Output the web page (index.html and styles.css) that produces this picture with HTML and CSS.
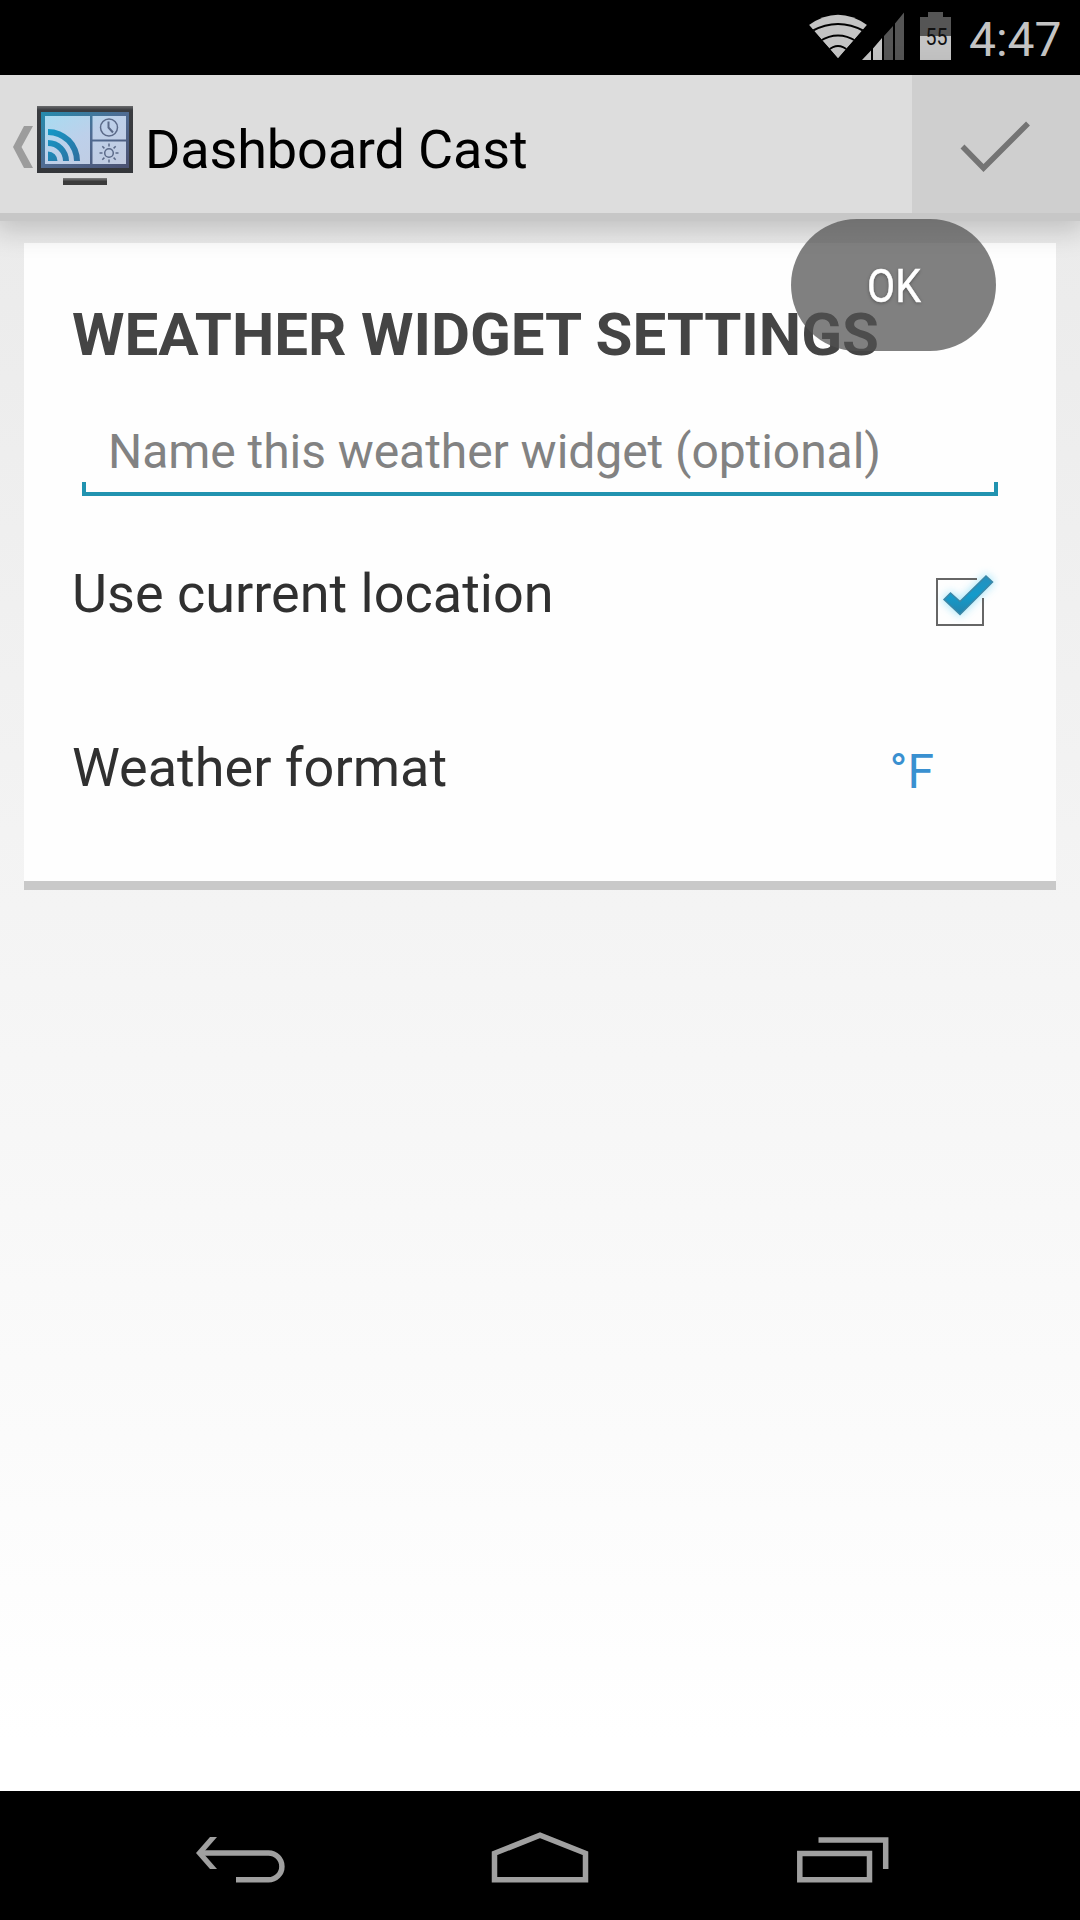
FILE: index.html
```html
<!DOCTYPE html>
<html lang="en">
<head>
<meta charset="utf-8">
<title>Dashboard Cast</title>
<link rel="stylesheet" href="styles.css">
</head>
<body>
<div class="screen">
  <header class="status-bar">
    <svg class="status-icons" width="146" height="50" viewBox="0 0 146 50">
      <defs>
        <clipPath id="fan"><path d="M30 48.500 L0 14 Q30 -9 60 14Z"/></clipPath>
      </defs>
      <g clip-path="url(#fan)">
        <path d="M30 48.500 L1 15 Q30 -5.500 59 15Z" fill="#c4c4c4"/>
        <g fill="none" stroke="#000" stroke-width="2">
          <path d="M4 21 Q30 7 56 21"/>
          <path d="M12 31 Q30 20 48 31"/>
          <path d="M20 40.500 Q30 31.500 40 40.500"/>
        </g>
      </g>
      <path d="M54 50 L63 40.500 V50Z M65 38.500 L74 28 V50 H65Z" fill="#c4c4c4"/>
      <path d="M76 26 L85 16 V50 H76Z M87 13.500 L96 2.500 V50 H87Z" fill="#555"/>
      <path d="M112 7 H120 V2 H135 V7 H143 V26 H112Z" fill="#555"/>
      <path d="M112 26 H143 V50 H112Z" fill="#c4c4c4"/>
      <text class="battery-level" x="128.500" y="35" text-anchor="middle" textLength="22" lengthAdjust="spacingAndGlyphs">55</text>
    </svg>
    <time class="clock">4:47</time>
  </header>

  <div class="action-bar">
    <svg class="up-caret" width="20" height="42" viewBox="0 0 20 42"><path d="M11 0 H20 L8.500 21 L20 42 H11 L0 21Z" fill="#9c9c9c"/></svg>
    <svg class="app-icon" width="96" height="80" viewBox="0 0 96 80">
      <defs>
        <linearGradient id="frame" x1="0" y1="0" x2="0" y2="1"><stop offset="0" stop-color="#6a6b6d"/><stop offset=".06" stop-color="#3a3c40"/><stop offset="1" stop-color="#34363a"/></linearGradient>
        <linearGradient id="bezel" x1="0" y1="0" x2="1" y2="1"><stop offset="0" stop-color="#248cae"/><stop offset=".5" stop-color="#506b92"/><stop offset="1" stop-color="#4b5171"/></linearGradient>
        <linearGradient id="glass" x1="0" y1="0" x2="1" y2="1"><stop offset="0" stop-color="#a8dbf1"/><stop offset=".45" stop-color="#bdd0ea"/><stop offset="1" stop-color="#c2cbe0"/></linearGradient>
        <linearGradient id="wave" x1="0" y1="0" x2="1" y2="1"><stop offset="0" stop-color="#1499c8"/><stop offset="1" stop-color="#2f6e9e"/></linearGradient>
      </defs>
      <path d="M0 0 H96 V67 H0Z" fill="url(#frame)"/>
      <path d="M4 6 H92 V62 H4Z" fill="url(#bezel)"/>
      <path d="M8 10 H53 V58 H8Z M55.500 10 H89 V33.500 H55.500Z M55.500 35.500 H89 V58 H55.500Z" fill="url(#glass)"/>
      <path d="M11 23 A32 32 0 0 1 43 55 H37 A26 26 0 0 0 11 29Z M11 34 A21 21 0 0 1 32 55 H26 A15 15 0 0 0 11 40Z M11 45.500 A9.500 9.500 0 0 1 20.500 55 H11Z" fill="url(#wave)"/>
      <g fill="none" stroke="#5b6a89" stroke-width="1.500">
        <circle cx="72" cy="21.500" r="8.500"/>
        <path d="M71.500 15.500 V21.500 L76 26.500" stroke-width="2"/>
        <circle cx="72" cy="47" r="4.300"/>
        <path d="M72 37.500 V40.500 M72 53.500 V56.500 M62.500 47 H65.500 M78.500 47 H81.500 M65.300 40.300 L67.400 42.400 M76.600 51.600 L78.700 53.700 M65.300 53.700 L67.400 51.600 M76.600 42.400 L78.700 40.300"/>
      </g>
      <path d="M26 72.500 H70 V79 H26Z" fill="#3b3b3b"/>
      <path d="M26 72.500 H70 V74.500 H26Z" fill="#626262"/>
    </svg>
    <h1 class="title">Dashboard Cast</h1>
    <button class="confirm" aria-label="OK">
      <svg width="72" height="54" viewBox="0 0 72 54"><path d="M3.500 25.500 L24.500 47 L69 2.500" fill="none" stroke="#747474" stroke-width="5.500"/></svg>
      <span class="tooltip"><span class="tooltip-text">OK</span></span>
    </button>
  </div>

  <main class="content">
    <section class="card">
      <h2 class="card-title">WEATHER WIDGET SETTINGS</h2>
      <div class="field"><span class="hint">Name this weather widget (optional)</span></div>
      <div class="row">
        <span class="label">Use current location</span>
        <svg class="checkbox" width="72" height="70" viewBox="0 0 72 70">
          <defs>
            <filter id="glow" x="-40%" y="-40%" width="180%" height="180%"><feGaussianBlur stdDeviation="4.500"/></filter>
            <linearGradient id="tick" x1="0" y1="0" x2="0" y2="1"><stop offset="0" stop-color="#278fbd"/><stop offset=".5" stop-color="#139bcb"/><stop offset="1" stop-color="#2584ad"/></linearGradient>
          </defs>
          <path d="M15.500 33.500 L22.500 26.500 L32 35 L58 9.500 L65 16 L32 49Z" fill="#8fdff8" stroke="#8fdff8" stroke-width="3" filter="url(#glow)" opacity=".75"/>
          <path d="M49 13 H9 V59 H55 V32" fill="none" stroke="#666" stroke-width="2"/>
          <path d="M16 33.500 L22.500 27 L32 35.500 L58 10 L64.500 16 L32 48.500Z" fill="url(#tick)" stroke="#3c87a7" stroke-width="1.500"/>
        </svg>
      </div>
      <div class="row">
        <span class="label">Weather format</span>
        <span class="unit">°F</span>
      </div>
    </section>
  </main>

  <nav class="nav-bar">
    <svg width="92" height="54" viewBox="0 0 92 54" fill="none" stroke="#a0a0a0" stroke-width="5.500"><path d="M6 22 H72.500 A13.400 13.400 0 0 1 72.500 48.800 H40"/><path d="M0 22 L14 6 H21 L7 22 L21 38 H14Z" fill="#a0a0a0" stroke="none"/></svg>
    <svg class="home" width="98" height="54" viewBox="0 0 98 54"><path d="M3.500 48.800 V22.300 L49 4.200 L94.500 22.300 V48.800Z" fill="none" stroke="#a0a0a0" stroke-width="5.500"/></svg>
    <svg width="92" height="54" viewBox="0 0 92 54" fill="none" stroke="#a0a0a0" stroke-width="5.500"><path d="M2.800 22.500 H72.500 V48.800 H2.800Z M21.500 9 H88.700 V38"/></svg>
  </nav>
</div>
</body>
</html>
```
FILE: styles.css
```css
* { box-sizing: border-box; }

body {
  margin: 0;
  font-family: Roboto, "Noto Sans", sans-serif;
}

svg { display: block; flex: none; }

.screen {
  display: flex;
  flex-direction: column;
  width: 1080px;
  height: 1920px;
  overflow: hidden;
  background: linear-gradient(#e9e9e9 75px, #fff 1740px);
}

.status-bar {
  display: flex;
  justify-content: flex-end;
  gap: 15px;
  height: 75px;
  padding-right: 19px;
  background: #000;
}

.status-icons { margin-top: 10px; }

.battery-level {
  font-size: 24px;
  fill: #111;
}

.clock {
  width: 92px;
  padding-top: 4px;
  font-size: 48px;
  line-height: 71px;
  color: #c4c4c4;
  white-space: nowrap;
}

.action-bar {
  position: relative;
  z-index: 1;
  display: flex;
  align-items: flex-start;
  height: 146px;
  padding-left: 13px;
  background: #ddd;
  border-bottom: 8px solid #c7c7c7;
  box-shadow: 0 4px 26px 6px rgba(0, 0, 0, .18);
}

.up-caret { margin-top: 51px; }

.app-icon { margin: 31px 0 0 4px; }

.title {
  flex: 1;
  margin: 0 0 0 12px;
  padding-top: 11px;
  font-size: 54px;
  font-weight: 400;
  line-height: 127px;
  letter-spacing: -.15px;
  color: #000;
  white-space: nowrap;
}

.confirm {
  position: relative;
  display: flex;
  width: 168px;
  height: 138px;
  padding: 46px 0 0 47px;
  border: 0;
  background: #cfcfcf;
  font: inherit;
}

/* Long-press hint hanging under the action button */
.tooltip {
  position: absolute;
  top: 144px;
  right: 84px;
  display: flex;
  justify-content: center;
  width: 205px;
  height: 132px;
  border-radius: 66px;
  background: rgba(81, 81, 81, .73);
}

.tooltip-text {
  font-size: 47px;
  line-height: 134px;
  color: #fff;
  -webkit-text-stroke: .5px #fff;
  text-shadow: 0 1px 4px rgba(0, 0, 0, .4);
  transform: scaleX(.87);
}

.content {
  flex: 1;
  padding: 22px 24px 0;
}

.card {
  height: 647px;
  padding: 57px 49px 0 48px;
  background: #fefefe;
  border-bottom: 9px solid #c9c9c9;
}

.card-title {
  margin: 0;
  font-size: 60px;
  font-weight: 700;
  line-height: 69px;
  letter-spacing: -.06px;
  color: #444;
  white-space: nowrap;
}

.field {
  height: 72px;
  margin: 55px 9px 66px 10px;
  padding-left: 26px;
  font-size: 48px;
  line-height: 56px;
  letter-spacing: -.06px;
  color: #828282;
  white-space: nowrap;
  background:
    linear-gradient(#2193b0, #2193b0) bottom / 100% 4px no-repeat,
    linear-gradient(#2193b0, #2193b0) left bottom / 4px 14px no-repeat,
    linear-gradient(#2193b0, #2193b0) right bottom / 4px 14px no-repeat;
}

.row {
  display: flex;
  justify-content: space-between;
  align-items: flex-start;
  height: 174px;
}

.label {
  font-size: 54px;
  line-height: 64px;
  color: #303030;
}

.checkbox { margin: 4px 7px 0 0; }

.unit {
  margin-right: 73px;
  font-size: 48px;
  line-height: 72px;
  color: #3990d0;
}

.nav-bar {
  display: flex;
  height: 129px;
  padding: 40px 0 0 196px;
  background: #000;
}

.home { margin: 0 208px 0 203px; }
```
